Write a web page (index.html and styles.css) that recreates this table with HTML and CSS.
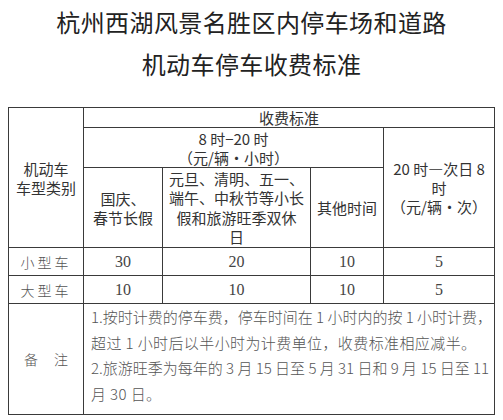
FILE: index.html
```html
<!DOCTYPE html>
<html lang="zh-CN">
<head>
<meta charset="utf-8">
<link rel="stylesheet" href="styles.css">
</head>
<body>
<div class="page">
  <h1 class="title">
    <span class="title-line">杭州西湖风景名胜区内停车场和道路</span>
    <span class="title-line">机动车停车收费标准</span>
  </h1>
  <table class="fees">
    <colgroup>
      <col class="c1"><col class="c2"><col class="c3"><col class="c4"><col class="c5">
    </colgroup>
    <tr class="r1">
      <th rowspan="3" class="hd">机动车<br>车型类别</th>
      <th colspan="4" class="hd">收费标准</th>
    </tr>
    <tr class="r2">
      <th colspan="3" class="hd">8 时−20 时<br>（元/辆・小时）</th>
      <th rowspan="2" class="hd">20 时—次日 8<br>时<br>（元/辆・次）</th>
    </tr>
    <tr class="r3">
      <th class="hd">国庆、<br>春节长假</th>
      <th class="hd long">元旦、清明、五一、<br>端午、中秋节等小长<br>假和旅游旺季双休<br>日</th>
      <th class="hd">其他时间</th>
    </tr>
    <tr class="r4">
      <td class="kind">小型车</td>
      <td class="num">30</td>
      <td class="num">20</td>
      <td class="num">10</td>
      <td class="num">5</td>
    </tr>
    <tr class="r5">
      <td class="kind">大型车</td>
      <td class="num">10</td>
      <td class="num">10</td>
      <td class="num">10</td>
      <td class="num">5</td>
    </tr>
    <tr class="r6">
      <td class="kind note-label"><span>备</span><span>注</span></td>
      <td colspan="4" class="note">
        <span class="nl full">1.按时计费的停车费，停车时间在 1 小时内的按 1 小时计费，</span>
        <span class="nl">超过 1 小时后以半小时为计费单位，收费标准相应减半。</span>
        <span class="nl full">2.旅游旺季为每年的 3 月 15 日至 5 月 31 日和 9 月 15 日至 11</span>
        <span class="nl">月 30 日。</span>
      </td>
    </tr>
  </table>
</div>
</body>
</html>
```

FILE: styles.css
```css
html, body {
  margin: 0;
  padding: 0;
  background: #ffffff;
}
.page {
  padding: 1px 8px 0 8px;
  font-family: "Noto Sans CJK SC", "Noto Sans", sans-serif;
  color: #333;
}
.title {
  margin: 0 0 22px 0;
  font-size: 24px;
  font-weight: normal;
  line-height: 42px;
  color: #222;
  text-align: center;
  display: flex;
  flex-direction: column;
}
.title-line {
  display: block;
  letter-spacing: 0.4px;
}
.fees {
  border-collapse: collapse;
  table-layout: fixed;
  width: 486px;
}
.c1 { width: 75px; }
.c2 { width: 79px; }
.c3 { width: 148px; }
.c4 { width: 73px; }
.c5 { width: 111px; }
.fees th, .fees td {
  border: 1px solid #3a3a3a;
  padding: 0;
  text-align: center;
  vertical-align: middle;
}
.hd {
  font-weight: normal;
  font-size: 15px;
  line-height: 19px;
  color: #333;
}
.long {
  letter-spacing: 0;
  white-space: nowrap;
  line-height: 19.5px;
}
.r1 { height: 20px; }
.r2 { height: 40px; }
.r3 { height: 80px; }
.r4, .r5 { height: 28px; }
.r6 { height: 110px; }
.kind {
  font-size: 14px;
  letter-spacing: 3px;
  color: #555;
  font-weight: 300;
}
.num {
  font-family: "Liberation Serif", serif;
  font-size: 16px;
  color: #444;
}
.note-label {
  letter-spacing: 0;
}
.note-label span + span {
  margin-left: 16px;
}
.note {
  text-align: left !important;
  padding: 0 6px 8px 7px !important;
  font-size: 15px;
  letter-spacing: 0.4px;
  line-height: 25.5px;
  color: #555;
  font-weight: 300;
}
.nl {
  display: block;
  white-space: nowrap;
}
.nl.full {
  text-align: justify;
  text-align-last: justify;
  letter-spacing: 0;
}
```
